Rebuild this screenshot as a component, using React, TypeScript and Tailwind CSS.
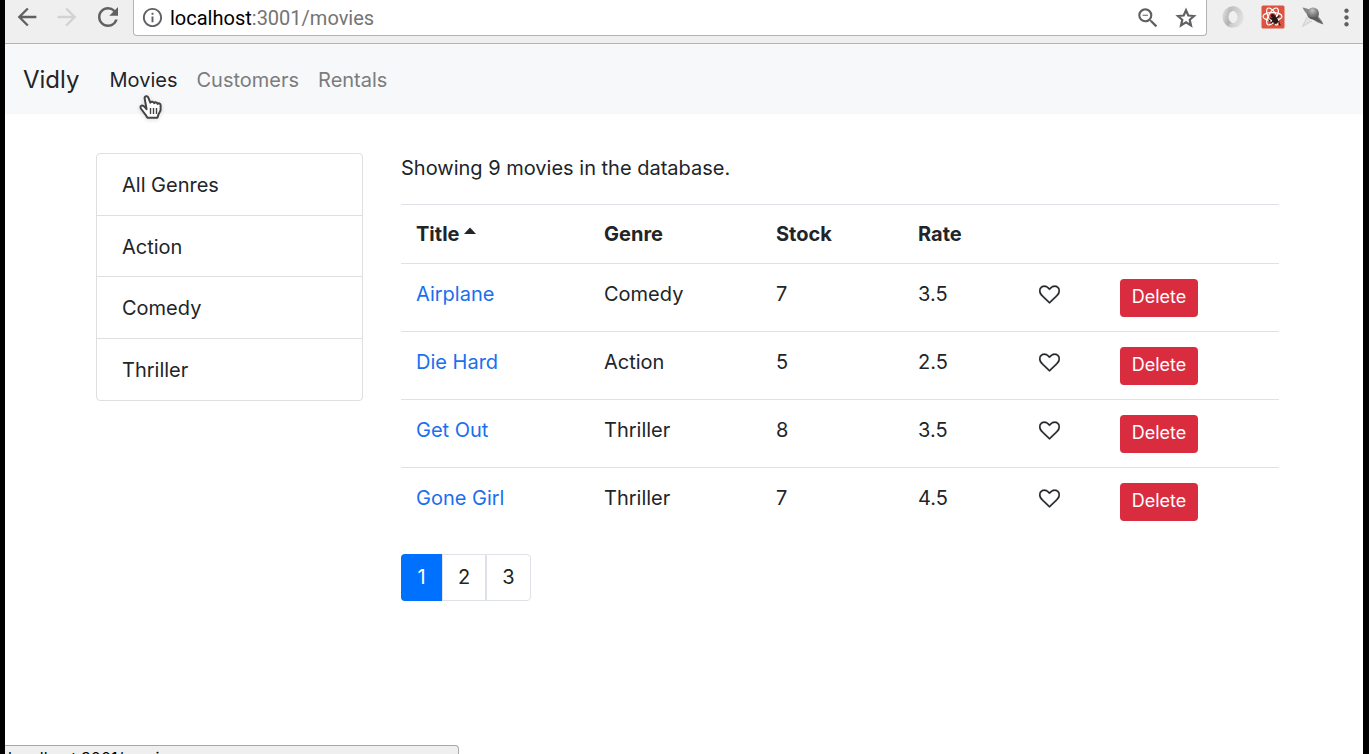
import React from "react";
import {
  MdArrowBack,
  MdArrowForward,
  MdInfoOutline,
  MdMoreVert,
  MdRefresh,
  MdZoomOut,
} from "react-icons/md";

type Movie = { title: string; genre: string; stock: number; rate: number };

const genres = ["All Genres", "Action", "Comedy", "Thriller"];

const movies: Movie[] = [
  { title: "Airplane", genre: "Comedy", stock: 7, rate: 3.5 },
  { title: "Die Hard", genre: "Action", stock: 5, rate: 2.5 },
  { title: "Get Out", genre: "Thriller", stock: 8, rate: 3.5 },
  { title: "Gone Girl", genre: "Thriller", stock: 7, rate: 4.5 },
];

function Heart() {
  return (
    <svg viewBox="0 0 1792 1792" className="h-[21px] w-[21px]" fill="currentColor" stroke="currentColor" strokeWidth="24" aria-hidden="true">
      <path d="M1664 596q0-81-21.5-143t-55-98.5-81.5-59.5-94-31-98-8-112 25.5-110.5 64-86.5 72-60 61.5q-18 22-49 22t-49-22q-24-28-60-61.5t-86.5-72-110.5-64-112-25.5-98 8-94 31-81.5 59.5-55 98.5-21.5 143q0 168 187 355l581 560 580-559q188-188 188-356zm128 0q0 221-229 450l-623 600q-18 18-44 18t-44-18l-624-602q-10-8-27.5-26t-55.5-65.5-68-97.5-53.5-121-23.5-138q0-220 127-344t351-124q62 0 126.5 21.5t120 58 95.5 68.5 76 68q36-36 76-68t95.5-68.5 120-58 126.5-21.5q224 0 351 124t127 344z" />
    </svg>
  );
}

function StarIcon() {
  return (
    <svg viewBox="0 0 24 24" className="h-6 w-6" fill="none" stroke="currentColor" strokeWidth="2.2" aria-hidden="true">
      <path d="M12 4.3L14.3 9.5 20 10 15.700 13.800 17 19.400 12 16.400 7 19.400 8.300 13.800 4 10 9.700 9.500Z" />
    </svg>
  );
}

function SwirlIcon() {
  return (
    <svg viewBox="0 0 24 24" className="h-6 w-6" aria-hidden="true">
      <defs>
        <linearGradient id="swirlA" x1="0" y1="0.3" x2="1" y2="0.7">
          <stop offset="0" stopColor="#dedede" />
          <stop offset="0.5" stopColor="#b0b0b0" />
          <stop offset="1" stopColor="#e4e4e4" />
        </linearGradient>
        <linearGradient id="swirlB" x1="0" y1="0.3" x2="1" y2="0.8">
          <stop offset="0" stopColor="#bdbdbd" />
          <stop offset="0.5" stopColor="#d2d2d2" />
          <stop offset="1" stopColor="#e6e6e6" />
        </linearGradient>
      </defs>
      <path d="M13 1.500C6 .8 1 6 1.500 12.500 1.800 17.500 5.500 21.500 10 22.500 13 22.500 15 21 16 18.500 11 19.500 7 15.500 7.500 11.500 8 7.500 10 5.500 13.500 5.500L17 3.500Z" fill="url(#swirlA)" />
      <path d="M11 22.500C18 23.200 23 18 22.500 11.500 22.200 6.500 18.500 2.500 14 1.500 11 1.500 9 3 8 5.500 13 4.500 17 8.500 16.500 12.500 16 16.500 14 18.500 10.500 18.500L7 20.500Z" fill="url(#swirlB)" />
    </svg>
  );
}

function ReactBugIcon() {
  return (
    <svg viewBox="0 0 24 24" className="h-6 w-6" aria-hidden="true">
      <rect x="0.5" y="0.5" width="23" height="23" rx="1.5" fill="#de5240" />
      <g fill="none" stroke="#fff" strokeWidth="1.2">
        <ellipse cx="11.5" cy="11.5" rx="9.5" ry="4" />
        <ellipse cx="11.5" cy="11.5" rx="9.5" ry="4" transform="rotate(60 11.5 11.5)" />
        <ellipse cx="11.5" cy="11.5" rx="9.5" ry="4" transform="rotate(120 11.5 11.5)" />
      </g>
      <g stroke="#2a1512" strokeWidth="1.2" strokeLinecap="round">
        <path d="M9 13l9 4M10 18l8-7M13 20l1-10M18 18l1 2M9 16l-1-1" />
      </g>
      <ellipse cx="14" cy="15" rx="2.8" ry="3.8" transform="rotate(-35 14 15)" fill="#2a1512" />
      <circle cx="11.5" cy="10.8" r="1.9" fill="#2a1512" />
    </svg>
  );
}

function SatelliteIcon() {
  return (
    <svg viewBox="0 0 24 24" className="h-6 w-6" aria-hidden="true">
      <defs>
        <radialGradient id="orb" cx="0.45" cy="0.25" r="0.75">
          <stop offset="0" stopColor="#c4c4c4" />
          <stop offset="0.5" stopColor="#858585" />
          <stop offset="1" stopColor="#555" />
        </radialGradient>
      </defs>
      <path d="M6 12L1.5 21.5 11 16" fill="#e2e2e2" stroke="#cfcfcf" />
      <path d="M1.5 2.5C8 3 19 10 22.5 19.5 14 17.5 5 10.5 1.5 2.5Z" fill="#888" />
      <circle cx="12" cy="8.5" r="6" fill="url(#orb)" />
      <path d="M8 12C13 15 18 17 22 19 18 14 17 13 16 12Z" fill="#5c5c5c" />
    </svg>
  );
}

function HandCursor() {
  return (
    <svg
      viewBox="0 0 24 26"
      className="pointer-events-none absolute left-[134px] top-[50px] h-[26px] w-6 drop-shadow-sm"
      aria-hidden="true"
    >
      <path
        d="M7.6 15.2C6.200 13.400 4.600 11.200 2.600 11.600 1 12 1.300 13.700 2.200 15L6.600 20.800 8.400 23.800H18.400L19.400 20.600 21.600 16.200V11C21.600 9.200 19.500 8.900 18.700 10 18.300 8.200 16.200 7.800 15.200 9.200 14.500 7.600 12.300 7.300 11.300 8.600L9.200 3.400C8.400 1.400 5.100 2 5.700 4.600Z"
        fill="#fff"
        stroke="#444"
        strokeWidth="2"
        strokeLinejoin="round"
      />
      <path d="M11.500 14v6M14.500 14v6M17.500 14v6" stroke="#444" strokeWidth="1.400" />
    </svg>
  );
}

function BrowserBar() {
  return (
    <header className="flex h-11 shrink-0 items-start border-b border-[#b4b4b4] bg-[#efefef] text-[#5f6063]">
      <div className="flex h-[34px] w-32 shrink-0 items-center gap-3 pl-2">
        <button aria-label="Back"><MdArrowBack size={28} /></button>
        <button aria-label="Forward" className="text-[#d2d2d2]"><MdArrowForward size={28} /></button>
        <button aria-label="Reload"><MdRefresh size={30} /></button>
      </div>
      <div className="flex h-9 min-w-0 flex-1 items-center rounded-b border border-t-0 border-[#b4b4b4] bg-white pl-[7px] pr-2">
        <MdInfoOutline size={23} className="shrink-0" />
        <p className="flex-1 truncate pl-[6px] font-['Roboto',sans-serif] text-[20px] text-[#747474]">
          <span className="text-black">localhost</span>:3001/movies
        </p>
        <button aria-label="Zoom out"><MdZoomOut size={26} /></button>
        <button aria-label="Bookmark" className="ml-[13px]"><StarIcon /></button>
      </div>
      <div className="flex h-[34px] shrink-0 items-center gap-4 pl-[14px] pr-[3px]">
        <button aria-label="Viewer extension"><SwirlIcon /></button>
        <button aria-label="React tools"><ReactBugIcon /></button>
        <button aria-label="Satellite extension"><SatelliteIcon /></button>
        <button aria-label="Menu" className="-ml-2"><MdMoreVert size={27} /></button>
      </div>
    </header>
  );
}

function NavBar() {
  return (
    <nav className="relative flex h-[70px] shrink-0 items-center bg-[#f7f8fa] px-[18px] pt-[2px] text-[20px] text-[#7b7c7d]">
      <a href="#home" className="mr-[30px] text-2xl text-[#212529]">Vidly</a>
      <div className="flex gap-[19px]">
        <a href="#movies" className="text-[#212529]">Movies</a>
        <a href="#customers">Customers</a>
        <a href="#rentals">Rentals</a>
      </div>
      <HandCursor />
    </nav>
  );
}

function MoviesTable() {
  return (
    <table className="w-full table-fixed text-left">
      <colgroup>
        <col className="w-[188px]" />
        <col className="w-[172px]" />
        <col className="w-[142px]" />
        <col className="w-[121px]" />
        <col className="w-[81px]" />
        <col />
      </colgroup>
      <thead>
        <tr className="h-[59px] border-t border-[#dee2e6] font-bold">
          <th className="px-[15px]">
            <button className="flex items-center gap-[5px]">
              Title
              <svg viewBox="0 0 12 7" className="mb-2 h-[7px] w-3" fill="currentColor" aria-hidden="true">
                <path d="M0 7L6 0.5 12 7Z" />
              </svg>
            </button>
          </th>
          <th className="px-[15px]">Genre</th>
          <th className="px-[15px]">Stock</th>
          <th className="px-[15px]">Rate</th>
          <th />
          <th />
        </tr>
      </thead>
      <tbody>
        {movies.map((movie) => (
          <tr key={movie.title} className="h-[68px] border-t border-[#dee2e6] align-top">
            <td className="px-[15px] pt-[15px]">
              <a href="#movie" className="text-[#1a6ff0]">{movie.title}</a>
            </td>
            <td className="px-[15px] pt-[15px]">{movie.genre}</td>
            <td className="px-[15px] pt-[15px]">{movie.stock}</td>
            <td className="px-[15px] pt-[15px]">{movie.rate}</td>
            <td className="px-[15px] pt-[15px]">
              <button aria-label={`Like ${movie.title}`} className="flex h-[30px] items-center"><Heart /></button>
            </td>
            <td className="px-[15px] pt-[15px]">
              <button className="flex h-[38px] w-[78px] items-center justify-center rounded bg-[#d92d3f] pb-[2px] text-lg text-white">
                Delete
              </button>
            </td>
          </tr>
        ))}
      </tbody>
    </table>
  );
}

export default function App() {
  return (
    <div className="relative flex min-h-screen flex-col overflow-hidden border-l-[5px] border-r-[6px] border-black bg-white font-['Inter',sans-serif] text-[20px] leading-[30px] text-[#212529]">
      <BrowserBar />
      <NavBar />
      <main className="flex flex-1 items-start gap-[38px] pl-[91px] pr-[84px] pt-[39px]">
        <ul className="grid min-h-[248px] w-[267px] shrink-0 auto-rows-fr divide-y divide-[#dfdfdf] rounded border border-[#dfdfdf]">
          {genres.map((genre) => (
            <li key={genre} className="flex">
              <button className="flex-1 px-[25px] pt-[2px] text-left">{genre}</button>
            </li>
          ))}
        </ul>
        <section className="min-w-0 flex-1">
          <p className="mb-[21px]">Showing 9 movies in the database.</p>
          <MoviesTable />
          <div className="mt-[18px] flex h-[47px]">
            <button aria-current="page" className="w-[41px] rounded-l bg-[#0070ff] text-white">1</button>
            <button className="w-11 border border-[#dee2e6]">2</button>
            <button className="w-[45px] rounded-r border border-[#dee2e6]">3</button>
          </div>
        </section>
      </main>
      <div className="absolute bottom-0 left-0 h-[9px] w-[454px] overflow-hidden rounded-tr border-r border-t border-[#a8a8a8] bg-[#efefef] pl-[3px] pt-[2px] text-[16px] leading-5 text-black">
        localhost:3001/movies
      </div>
    </div>
  );
}
